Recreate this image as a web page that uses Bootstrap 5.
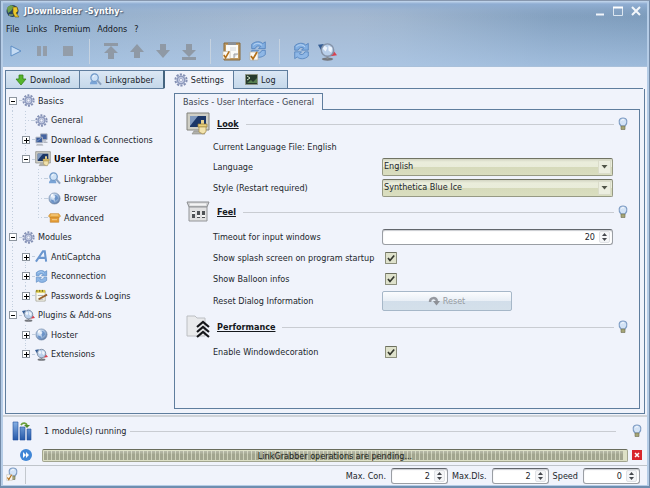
<!DOCTYPE html>
<html lang="en">
<head>
<meta charset="utf-8">
<meta name="viewport" content="width=device-width, initial-scale=1">
<title>JDownloader -Synthy-</title>
<link href="https://cdn.jsdelivr.net/npm/bootstrap@5.3.0/dist/css/bootstrap.min.css" rel="stylesheet">
<style>
:root{--pane:#f0f3fb;--edge:#5f7d9d;--ink:#22262c}
body{font:9px/14px "DejaVu Sans Condensed","DejaVu Sans",sans-serif;color:var(--ink);background:#9db8d5}
button,input,select{font:inherit;color:inherit}
svg{display:block;flex:none;overflow:visible}
ul{list-style:none;margin:0;padding:0}
.win{min-height:100vh;border:1px solid #7289a6;border-top-color:#8797ae;border-bottom:2px solid #6f8eaf;padding:0 2px 1px;background:#b5cce6}
.hdr{background:linear-gradient(180deg,#c5d8ee 0,#8fadd2 3px,rgba(150,178,214,.3) 9px,rgba(150,178,214,0) 16px),linear-gradient(180deg,rgba(178,206,238,0) 20%,rgba(178,206,238,.62)),linear-gradient(90deg,#8fadcb 0,#a3b7cf 40%,#a3b7cf 55%,#9eb4cd 62%,#83a0bf 85%,#7c9bbb);border-bottom:1px solid #a9c0da;height:66px}
.titlebar{height:21px;padding:0 6px 1px 3px}
.ttl{font-weight:700;color:#fff;text-shadow:1px 1px 1px #41566f,0 0 2px #5d7590}
.plain{border:0;background:none;padding:0;color:inherit}
.menus{height:14px;padding-left:3px;gap:7px}
.menus a{color:#15191e;text-decoration:none}
.tools{height:30px}
.tools button{width:26px;height:26px;display:flex;align-items:center;justify-content:center}
.sep{width:1px;height:25px;margin:0 8px;background:#c5d2e0}
.pane{background:var(--pane)}
.tabs{height:22px;padding:3px 0 0 2px;position:relative}
.tabs button{height:19px;border:1px solid var(--edge);border-right-width:0;background:linear-gradient(#dbe7f4,#c5d8ea);padding:0 9px;gap:3px;display:flex;align-items:center}
.tabs button:last-of-type{border-right-width:1px;border-right-color:var(--edge);padding:0 11px}
.tabs button.on{background:var(--pane);border-bottom-color:var(--pane);border-left:2px solid #45647f}
.tabs .rest{border-bottom:1px solid var(--edge)}
.mainbox{border:1px solid var(--edge);border-top:0;margin:0 2px 1px}
.tree{width:168px;padding-top:2px}
.tree ul{display:grid;grid-auto-rows:1fr;height:273px}
.tree li{display:flex;align-items:center;white-space:nowrap}
.cell{width:13px;align-self:stretch;flex:none;display:flex;align-items:center;justify-content:center;background:repeating-linear-gradient(#c3cfde 0 1px,transparent 1px 3px) 6px 0/1px 100% no-repeat}
.cell.off{background:none}
.cell.half{background-size:1px 50%}
.cell.low{background-position:6px 100%;background-size:1px 50%}
.cell button{width:8px;height:8px;border:1px solid #8d959e;background:#fff;padding:0}
.cell.leaf{background-image:repeating-linear-gradient(#c3cfde 0 1px,transparent 1px 3px),repeating-linear-gradient(90deg,#c3cfde 0 1px,transparent 1px 3px);background-position:6px 0,6px 50%;background-size:1px 100%,7px 1px;background-repeat:no-repeat}
.cell.leaf.half{background-size:1px 50%,7px 1px}
.dash{width:3px;height:1px;background:#c3cfde;flex:none}
.tree li svg.ic{margin-right:3px}
.rightside{padding:4px 4px 4px 0}
.subtab{height:17px;border:1px solid var(--edge);border-bottom:0;padding:0 8px;background:var(--pane);color:#3c444e;margin-bottom:-1px;position:relative;z-index:1}
.panel{border:1px solid var(--edge);padding:2px 11px 0 11px}
.sect{padding-bottom:2px}
.sect-head{height:24px;margin-bottom:2px;gap:7px}
.sect-head h2{font-size:9px;line-height:14px;font-weight:700;text-decoration:underline;margin:0;color:#15181c}
.sect-head .hr,.status .hr{height:1px;background:#c9ccd2}
.sect-head svg.bulb{margin-left:-3px}
.f-row{height:21px;padding:0 15px 0 27px;display:flex;align-items:center}
.f-row.note{height:18px}
.f-row.tall{height:24px}
.f-row>label,.f-row>.lab{width:169px;flex:none;white-space:nowrap}
.f-row select{flex:1;min-width:0;height:18px;padding:0 20px 1px 1px;border:1px solid #969984;border-top-color:#707363;border-radius:2px;appearance:none;color:#22262c;background:url("data:image/svg+xml,%3Csvg xmlns='http://www.w3.org/2000/svg' width='14' height='14'%3E%3Crect x='.5' y='.5' width='12' height='13' fill='%23eceee0' stroke='%23dadcca'/%3E%3Cpath d='M3.500 5h6l-3 3.500z' fill='%23505448'/%3E%3C/svg%3E") right 0 center no-repeat,linear-gradient(#d2d4c2 0,#eaeddb 3px,#e9ecda 50%,#d6dabb 50%,#dadec0)}
.spin{height:16px;border:1px solid #9a9ea4;border-top:1px solid #62666c;border-radius:3px;background:#fff;box-shadow:inset 0 1px 1px #c9cbd0}
.spin input{border:0;background:none;text-align:right;min-width:0;width:10px;flex:1;padding:0 4px 0 0;height:14px;outline:0;appearance:textfield;-moz-appearance:textfield}
.spin input::-webkit-inner-spin-button{appearance:none;margin:0}
.updown{width:11px;margin-right:2px;border:1px solid #e0e2e6;height:12px;border-radius:2px;background:#f4f5f7}
.updown button{height:5px;width:100%;display:flex;justify-content:center;align-items:center}
.f-row input[type=checkbox]{appearance:none;width:12px;height:12px;margin:0 0 0 3px;border:1px solid #8c8f7c;border-top-color:#6d705f;border-radius:1px;background:url("data:image/svg+xml,%3Csvg xmlns='http://www.w3.org/2000/svg' viewBox='0 0 10 10'%3E%3Cpath d='M2 5l2 2.500L8.200 2.500' fill='none' stroke='%2333362d' stroke-width='1.700'/%3E%3C/svg%3E") center/10px no-repeat,#dfe2cc}
.reset{width:130px;height:20px;border:1px solid #a6b7c8;border-radius:2px;background:linear-gradient(#fbfcfe 0,#e9eff6 48%,#d2deea 50%,#d4e0ea);color:#979ba1!important;gap:3px}
.status{border-top:2px solid #cfd3d8;height:51px;padding:2px 5px 0 9px}
.modrow{height:24px;margin-bottom:5px}
.barrow{height:14px;padding-left:8px;gap:10px}
.meter{position:relative;height:13px;border:1px solid #a2a58f;border-top-color:#696c5c;border-radius:2px;background:#dde0c6;padding:1px 4px 1px 1px;margin-right:-6px}
.meter .progress-bar{background:linear-gradient(rgba(255,255,255,.25),transparent 40%),repeating-linear-gradient(90deg,#a2a58f 0 3px,#cdd0b9 3px 4px)}
.meter .cap{position:absolute;inset:0;line-height:12px;text-align:center;color:#20231c}
.foot{border-top:1px solid #bfc4ca;height:20px;padding:0 7px 0 3px;margin-top:-1px}
.foot .spin{width:57px}
.foot label{margin:0 5px 0 4px}
.foot .tip{width:20px;height:17px;border-right:1px solid #c3c8ce}
</style>
</head>
<body>
<svg width="0" height="0" class="position-absolute" aria-hidden="true">
<defs>
<linearGradient id="gb" x1="0" y1="0" x2="0" y2="1"><stop offset="0" stop-color="#86b0e4"/><stop offset="1" stop-color="#2458a8"/></linearGradient>
<radialGradient id="gg" cx=".4" cy=".35" r=".7"><stop offset="0" stop-color="#f3f8ff"/><stop offset=".55" stop-color="#a3bfe0"/><stop offset="1" stop-color="#4c6c9c"/></radialGradient>
<symbol id="gear" viewBox="0 0 14 14"><circle cx="7" cy="7" r="5.600" fill="none" stroke="#8490b4" stroke-width="2" stroke-dasharray="2.200 1.300"/><circle cx="7" cy="7" r="3.700" fill="#c9d0e6" stroke="#8d99bd" stroke-width="1.600"/><circle cx="7" cy="7" r="1.600" fill="#f4f6fc" stroke="#8a94b8" stroke-width=".6"/></symbol>
<symbol id="pcs" viewBox="0 0 14 14"><path d="M6 1h7v6H6z" fill="#4563a0" stroke="#a7adb8"/><path d="M8 8.500h4M9 10h4.500" stroke="#9ba1ac"/><path d="M1 4.500h7v6H1z" fill="#3c5c98" stroke="#b1b6c0"/><path d="M2 9l5-4" stroke="#7e9ccd"/><path d="M2 12h6l1 1.500H1z" fill="#a2a7b0"/></symbol>
<symbol id="monitor" viewBox="0 0 24 24"><path d="M1 1h22v17H1z" fill="#cfcfc6" stroke="#82827c"/><path d="M4 4h16v11H4z" fill="#1c3767"/><path d="M4 4h8l-8 10z" fill="#7f99be"/><path d="M8 19h9l2 3H6z" fill="#b1b1ab" stroke="#8a8a84" stroke-width=".6"/><path d="M15 8h3v4h-3z" fill="#e6d08e"/><path d="M12 12h9v3h-9z" fill="#e9cf7c" stroke="#967a32" stroke-width=".7"/><path d="M13 15h7v5l-3 2-4-2z" fill="#f2e3ae" stroke="#a88c46" stroke-width=".7"/></symbol>
<symbol id="grab" viewBox="0 0 14 14"><path d="M1 12c0-3 2-4 4-4s4 1 4 4z" fill="#7aa4d6"/><circle cx="6" cy="5" r="4" fill="#cfe2f6" stroke="#6f98c8" stroke-width="1.300"/><path d="M9 8l4 4.500" stroke="#8ba2bf" stroke-width="2.200"/><path d="M4 4l2-1.500" stroke="#fff"/></symbol>
<symbol id="globe" viewBox="0 0 14 14"><circle cx="7" cy="7" r="6" fill="url(#gg)" stroke="#7388a8" stroke-width=".7"/><path d="M7 3l3 1 1 3-3 3-1-3 1-2zM3 8l3 1 1 3-3-1z" fill="#6b93c8"/><path d="M3 3l3-1-2 4z" fill="#fff"/></symbol>
<symbol id="boxi" viewBox="0 0 14 14"><path d="M0 5l2-3h10l2 3-2 1.500H2z" fill="#eeb14a" stroke="#c17c1d" stroke-width=".7"/><path d="M2 6h10v6H2z" fill="#e49c35" stroke="#b9761d" stroke-width=".6"/><path d="M3 3.500h8M4 9h6" stroke="#f8d69c"/></symbol>
<symbol id="capa" viewBox="0 0 14 14"><path d="M1 12.500L8.500 1.500h2l1.500 11M4 8.500h7" fill="none" stroke="#6a96cf" stroke-width="2.200"/></symbol>
<symbol id="sync" viewBox="0 0 20 20"><path d="M2 9V4c4-4 10-4 13-1l3-2v8h-8l2.500-2.500C10 5 7 6 6 9z" fill="#82afe2" stroke="#4677b6" stroke-width=".8"/><path d="M18 11v5c-4 4-10 4-13 1l-3 2v-8h8l-2.500 2.500C10 15 13 14 14 11z" fill="#8eb7e6" stroke="#4677b6" stroke-width=".8"/><path d="M4 5c3-3 7-3 10 0" fill="none" stroke="#c8def7"/></symbol>
<symbol id="note" viewBox="0 0 14 14"><path d="M1 2h10v11H1z" fill="#f9f8ee" stroke="#a0a092" stroke-width=".8"/><path d="M1 1h10v3H1z" fill="#d8c642"/><path d="M2 1v2M5 1v2M8 1v2" stroke="#665c22"/><path d="M3 7h6M3 11h6" stroke="#a9adb3"/><path d="M4 11l9-5" stroke="#98612b" stroke-width="2"/></symbol>
<symbol id="world" viewBox="0 0 20 20"><path d="M0 3l6-1-2 8z" fill="#355d93"/><path d="M14 6l6 8-7 1z" fill="#d9404e"/><ellipse cx="10" cy="18" rx="6" ry="1.700" fill="#74777d"/><path d="M9 14h2v4H9z" fill="#878b91"/><circle cx="10" cy="8.500" r="6.500" fill="#b9cfea" stroke="#8593a8" stroke-width="1.500"/><path d="M7 4l3 2-2 4-3-3zM11 4l4 2-1 5-3-2z" fill="#eef4fc"/></symbol>
<symbol id="bulb" viewBox="0 0 10 14"><path d="M3 9C0 6 .5 1 5 1s5 5 2 8z" fill="#d3e3f6" stroke="#7e9cc3" stroke-width="1.100"/><path d="M3.500 3.500C4 2.500 5 2.500 6 3" fill="none" stroke="#fff"/><path d="M3 9h4v3.500H3z" fill="#a5a576" stroke="#6c6c50" stroke-width=".6"/></symbol>
<symbol id="tick" viewBox="0 0 10 10"><path d="M1 1h8v8H1z" fill="#fcfaf4" stroke="#b9b3a5" stroke-width=".7"/><path d="M2 5l2 3 4-7" fill="none" stroke="#b3701a" stroke-width="1.700"/></symbol>
<symbol id="uparr" viewBox="0 0 16 16"><path d="M8 1l7 8h-4v6H5V9H1z" fill="#8f99a5"/></symbol>
</defs></svg>

<div class="win d-flex flex-column">
<header class="hdr">
  <div class="titlebar d-flex align-items-center">
    <svg width="14" height="14" viewBox="0 0 14 14"><circle cx="6.500" cy="7" r="6" fill="#29445f"/><path d="M1 4c3-4 6-3 7-1L5 7 2 9z" fill="#6fa04c"/><path d="M7 3h4l1 4-2 2 3 4H9L7 9z" fill="#ecc92b" stroke="#6e5c10" stroke-width=".6"/><path d="M3 11h4" stroke="#b4ce62"/></svg>
    <span class="ttl ms-1 flex-grow-1">JDownloader -Synthy-</span>
    <button class="plain me-1" aria-label="Minimize"><svg width="10" height="10"><path d="M1 8.500h8" stroke="#f1f5fa" stroke-width="2"/></svg></button>
    <button class="plain mx-1" aria-label="Maximize"><svg width="10" height="10"><path d="M.5 1.500h9v8h-9z" fill="none" stroke="#dce6f0"/><path d="M0 1.500h10" stroke="#fff" stroke-width="2"/></svg></button>
    <button class="plain ms-1" aria-label="Close"><svg width="10" height="10"><path d="M1 1l8 8M9 1L1 9" stroke="#f4f7fb" stroke-width="2"/></svg></button>
  </div>
  <nav class="menus d-flex" aria-label="Main"><a href="#">File</a><a href="#">Links</a><a href="#">Premium</a><a href="#">Addons</a><a href="#">?</a></nav>
  <div class="tools d-flex align-items-center">
    <button class="plain" aria-label="Start"><svg width="12" height="12"><path d="M1 1l10 5-10 5z" fill="#c5dbf3" stroke="#5f8fc6"/></svg></button>
    <button class="plain" aria-label="Pause"><svg width="10" height="10"><path d="M0 0h4v10H0zM6 0h4v10H6z" fill="#939da9"/></svg></button>
    <button class="plain" aria-label="Stop"><svg width="10" height="10"><path d="M0 0h10v10H0z" fill="#939da9"/></svg></button>
    <i class="sep"></i>
    <button class="plain" aria-label="Move to top"><svg width="16" height="17"><path d="M1 0h14v3H1zM8 3l7 7h-4v6H5v-6H1z" fill="#8f99a5"/></svg></button>
    <button class="plain" aria-label="Move up"><svg width="16" height="16"><use href="#uparr"/></svg></button>
    <button class="plain" aria-label="Move down"><svg width="16" height="16" viewBox="0 0 16 16"><path d="M8 15l7-8h-4V1H5v6H1z" fill="#8f99a5"/></svg></button>
    <button class="plain" aria-label="Move to bottom"><svg width="16" height="17"><path d="M1 14h14v3H1zM8 14l7-7h-4V1H5v6H1z" fill="#8f99a5"/></svg></button>
    <i class="sep"></i>
    <button class="plain" aria-label="Clipboard"><svg width="20" height="20"><path d="M2 2h16v17H2z" fill="#c09a62" stroke="#86683a"/><path d="M4 4h12v13H4z" fill="#fbfbf9"/><path d="M6 1h8v3H6z" fill="#8b9097"/><path d="M8 7h6M8 9h6" stroke="#d4d7db"/><path d="M12 17v-4h4" fill="#d7d8da" stroke="#9c9fa4"/><use href="#tick" y="9" width="9" height="10"/></svg></button>
    <button class="plain" aria-label="Auto reconnect"><svg width="18" height="20" viewBox="0 0 18 20"><use href="#sync" x="1" width="17" height="17"/><use href="#tick" y="10" width="10" height="10"/></svg></button>
    <i class="sep"></i>
    <button class="plain" aria-label="Reconnect"><svg width="17" height="18"><use href="#sync"/></svg></button>
    <button class="plain" aria-label="Update"><svg width="19" height="19"><use href="#world"/></svg></button>
  </div>
</header>

<div class="pane flex-grow-1 d-flex flex-column">
  <div class="tabs d-flex" role="tablist">
    <button role="tab"><svg width="12" height="12" viewBox="1 0 12 12"><path d="M5 1h4v4h3L7 11 2 5h3z" fill="#55b52c" stroke="#35841b" stroke-width=".8"/></svg>Download</button>
    <button role="tab"><svg width="13" height="13"><use href="#grab"/></svg>Linkgrabber</button>
    <button role="tab" class="on" aria-selected="true"><svg width="14" height="14"><use href="#gear"/></svg>Settings</button>
    <button role="tab"><svg width="13" height="11" viewBox="0 0 13 11"><path d="M.5.5h12v10H.5z" fill="#273b2e" stroke="#8c9485"/><path d="M2 2l3 2-3 2" fill="none" stroke="#d5e6c9"/><path d="M2 9l4-3 2 2 4-4v5z" fill="#577f4f"/></svg>Log</button>
    <div class="rest flex-grow-1 me-1"></div>
  </div>

  <main class="mainbox flex-grow-1 d-flex">
    <nav class="tree flex-shrink-0" aria-label="Settings tree"><ul>
      <li><span class="cell low"><button aria-label="Collapse"><svg width="6" height="6"><path d="M1 3.500h4" stroke="#000"/></svg></button></span><i class="dash"></i><svg class="ic" width="13" height="13"><use href="#gear"/></svg>Basics</li>
      <li><span class="cell"></span><span class="cell leaf"></span><i class="dash"></i><svg class="ic" width="13" height="13"><use href="#gear"/></svg>General</li>
      <li><span class="cell"></span><span class="cell"><button aria-label="Expand"><svg width="6" height="6"><path d="M1 3.500h5M3.500 1v5" stroke="#000"/></svg></button></span><i class="dash"></i><svg class="ic" width="13" height="13"><use href="#pcs"/></svg>Download &amp; Connections</li>
      <li class="fw-bold text-black"><span class="cell"></span><span class="cell half"><button aria-label="Collapse"><svg width="6" height="6"><path d="M1 3.500h4" stroke="#000"/></svg></button></span><i class="dash"></i><svg class="ic" width="16" height="16"><use href="#monitor"/></svg>User Interface</li>
      <li><span class="cell"></span><span class="cell off"></span><span class="cell leaf"></span><i class="dash"></i><svg class="ic" width="13" height="13"><use href="#grab"/></svg>Linkgrabber</li>
      <li><span class="cell"></span><span class="cell off"></span><span class="cell leaf"></span><i class="dash"></i><svg class="ic" width="13" height="13"><use href="#globe"/></svg>Browser</li>
      <li><span class="cell"></span><span class="cell off"></span><span class="cell leaf half"></span><i class="dash"></i><svg class="ic" width="13" height="12"><use href="#boxi"/></svg>Advanced</li>
      <li><span class="cell"><button aria-label="Collapse"><svg width="6" height="6"><path d="M1 3.500h4" stroke="#000"/></svg></button></span><i class="dash"></i><svg class="ic" width="13" height="13"><use href="#gear"/></svg>Modules</li>
      <li><span class="cell"></span><span class="cell"><button aria-label="Expand"><svg width="6" height="6"><path d="M1 3.500h5M3.500 1v5" stroke="#000"/></svg></button></span><i class="dash"></i><svg class="ic" width="13" height="13"><use href="#capa"/></svg>AntiCaptcha</li>
      <li><span class="cell"></span><span class="cell"><button aria-label="Expand"><svg width="6" height="6"><path d="M1 3.500h5M3.500 1v5" stroke="#000"/></svg></button></span><i class="dash"></i><svg class="ic" width="13" height="13"><use href="#sync"/></svg>Reconnection</li>
      <li><span class="cell"></span><span class="cell half"><button aria-label="Expand"><svg width="6" height="6"><path d="M1 3.500h5M3.500 1v5" stroke="#000"/></svg></button></span><i class="dash"></i><svg class="ic" width="13" height="13"><use href="#note"/></svg>Passwords &amp; Logins</li>
      <li><span class="cell half"><button aria-label="Collapse"><svg width="6" height="6"><path d="M1 3.500h4" stroke="#000"/></svg></button></span><i class="dash"></i><svg class="ic" width="13" height="13"><use href="#world"/></svg>Plugins &amp; Add-ons</li>
      <li><span class="cell off"></span><span class="cell"><button aria-label="Expand"><svg width="6" height="6"><path d="M1 3.500h5M3.500 1v5" stroke="#000"/></svg></button></span><i class="dash"></i><svg class="ic" width="13" height="13"><use href="#globe"/></svg>Hoster</li>
      <li><span class="cell off"></span><span class="cell half"><button aria-label="Expand"><svg width="6" height="6"><path d="M1 3.500h5M3.500 1v5" stroke="#000"/></svg></button></span><i class="dash"></i><svg class="ic" width="13" height="13"><use href="#world"/></svg>Extensions</li>
    </ul></nav>

    <div class="rightside flex-grow-1 d-flex flex-column">
      <button class="subtab align-self-start">Basics - User Interface - General</button>
      <form class="panel flex-grow-1">
        <section class="sect">
          <div class="sect-head d-flex align-items-center"><svg width="24" height="24"><use href="#monitor"/></svg><h2>Look</h2><div class="hr flex-grow-1"></div><svg class="bulb" width="10" height="14"><use href="#bulb"/></svg></div>
          <div class="f-row note"><span class="lab">Current Language File: English</span></div>
          <div class="f-row"><label for="lang">Language</label><select id="lang"><option>English</option></select></div>
          <div class="f-row"><label for="sty">Style (Restart required)</label><select id="sty"><option>Synthetica Blue Ice</option></select></div>
        </section>
        <section class="sect">
          <div class="sect-head d-flex align-items-center"><svg width="24" height="22" viewBox="0 0 24 22"><path d="M1 1h22l-2 5H3z" fill="#d2d3d5" stroke="#8c8e91"/><path d="M3 6h18v14H3z" fill="#e1e1e2" stroke="#929497"/><path d="M4 3.500h16" stroke="#f4f4f5" stroke-width="2"/><path d="M6 10h3v7H6zM11 10h3v7h-3zM16 10h3v7h-3z" fill="#4f5256"/><path d="M6 11h3v2H6zM11 14h3v2h-3zM16 14h3v2h-3z" fill="#f5f5f5"/></svg><h2>Feel</h2><div class="hr flex-grow-1"></div><svg class="bulb" width="10" height="14"><use href="#bulb"/></svg></div>
          <div class="f-row"><label for="tmo">Timeout for input windows</label><div class="spin d-flex align-items-center flex-grow-1"><input id="tmo" type="number" value="20"><div class="updown"><button type="button" class="plain" aria-label="Increase"><svg width="5" height="3"><path d="M0 3l2.500-3L5 3z" fill="#44474c"/></svg></button><button type="button" class="plain" aria-label="Decrease"><svg width="5" height="3"><path d="M0 0l2.500 3L5 0z" fill="#44474c"/></svg></button></div></div></div>
          <div class="f-row"><label for="spl">Show splash screen on program startup</label><input id="spl" type="checkbox" checked></div>
          <div class="f-row"><label for="bal">Show Balloon infos</label><input id="bal" type="checkbox" checked></div>
          <div class="f-row tall"><label for="rst">Reset Dialog Information</label><button id="rst" type="button" disabled class="reset d-flex align-items-center justify-content-center"><svg width="11" height="10"><path d="M1 6c0-5 6-5 7-1" fill="none" stroke="#9699a0" stroke-width="2.500"/><path d="M4 5h7L7.500 9.500z" fill="#8d9096"/></svg>Reset</button></div>
        </section>
        <section class="sect">
          <div class="sect-head d-flex align-items-center"><svg width="24" height="24"><path d="M1 1h8l2 2h8v18H1z" fill="#e9eaec" stroke="#bcbec2"/><path d="M11 12l6-5 6 5M11 17l6-5 6 5M11 22l6-5 6 5" fill="none" stroke="#15161a" stroke-width="2.200"/></svg><h2>Performance</h2><div class="hr flex-grow-1"></div><svg class="bulb" width="10" height="14"><use href="#bulb"/></svg></div>
          <div class="f-row"><label for="deco">Enable Windowdecoration</label><input id="deco" type="checkbox" checked></div>
        </section>
      </form>
    </div>
  </main>

  <section class="status">
    <div class="modrow d-flex align-items-center"><svg width="20" height="20"><path d="M1 1h5v18H1zM8 6h5v13H8zM15 8h4v11h-4z" fill="url(#gb)" stroke="#2450a0" stroke-width=".6"/><path d="M9 4c2-3 5-2 6 0" fill="none" stroke="#6aa03a" stroke-width="1.800"/><path d="M12 4h6l-3 3z" fill="#528a28"/></svg><span class="ms-2 ps-1">1 module(s) running</span><div class="hr flex-grow-1 ms-1 me-3"></div><svg width="10" height="14"><use href="#bulb"/></svg></div>
    <div class="barrow d-flex align-items-center"><svg width="12" height="12"><circle cx="6" cy="6" r="6" fill="#3f86d6"/><path d="M3 3l3 3-3 3zM6 3l3 3-3 3z" fill="#fff"/></svg>
      <div class="meter flex-grow-1"><div class="progress-bar h-100" role="progressbar" style="width:100%" aria-valuenow="100" aria-valuemin="0" aria-valuemax="100"></div><div class="cap">LinkGrabber operations are pending...</div></div>
      <button class="plain" aria-label="Cancel"><svg width="10" height="10"><path d="M0 0h10v10H0z" fill="#d8262c"/><path d="M3 3l4 4M7 3L3 7" stroke="#fff" stroke-width="1.500"/></svg></button></div>
  </section>
  <footer class="foot d-flex align-items-center">
    <div class="tip"><svg width="12" height="15" viewBox="0 0 12 15"><use href="#bulb" x="2" width="10" height="14"/><use href="#tick" y="7" width="7" height="7"/></svg></div>
    <div class="flex-grow-1"></div>
    <label for="mc">Max. Con.</label><div class="spin d-flex align-items-center"><input id="mc" type="number" value="2"><div class="updown"><button class="plain" aria-label="Increase"><svg width="5" height="3"><path d="M0 3l2.500-3L5 3z" fill="#44474c"/></svg></button><button class="plain" aria-label="Decrease"><svg width="5" height="3"><path d="M0 0l2.500 3L5 0z" fill="#44474c"/></svg></button></div></div>
    <label for="md">Max.Dls.</label><div class="spin d-flex align-items-center"><input id="md" type="number" value="2"><div class="updown"><button class="plain" aria-label="Increase"><svg width="5" height="3"><path d="M0 3l2.500-3L5 3z" fill="#44474c"/></svg></button><button class="plain" aria-label="Decrease"><svg width="5" height="3"><path d="M0 0l2.500 3L5 0z" fill="#44474c"/></svg></button></div></div>
    <label for="sp">Speed</label><div class="spin d-flex align-items-center"><input id="sp" type="number" value="0"><div class="updown"><button class="plain" aria-label="Increase"><svg width="5" height="3"><path d="M0 3l2.500-3L5 3z" fill="#44474c"/></svg></button><button class="plain" aria-label="Decrease"><svg width="5" height="3"><path d="M0 0l2.500 3L5 0z" fill="#44474c"/></svg></button></div></div>
  </footer>
</div>
</div>
<script src="https://cdn.jsdelivr.net/npm/bootstrap@5.3.0/dist/js/bootstrap.bundle.min.js"></script>
</body>
</html>
